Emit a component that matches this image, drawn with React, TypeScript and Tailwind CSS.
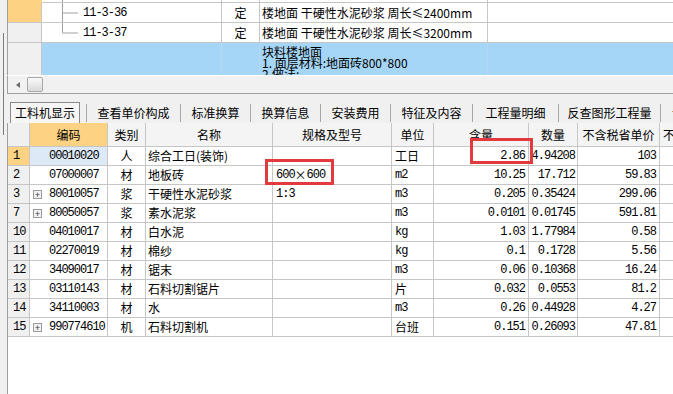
import React from 'react';

const cjk = "font-['Noto_Sans_CJK_SC',sans-serif]";
const mono = "font-['Liberation_Mono',monospace] text-[12px] tracking-[-1px]";

const rows = [
  { n: '1', code: '00010020', plus: false, type: '人', name: '综合工日(装饰)', spec: '', unit: '工日', qty: '2.86', amt: '4.94208', price: '103', sel: true },
  { n: '2', code: '07000007', plus: false, type: '材', name: '地板砖', spec: '600×600', unit: 'm2', qty: '10.25', amt: '17.712', price: '59.83' },
  { n: '3', code: '80010057', plus: true, type: '浆', name: '干硬性水泥砂浆', spec: '1:3', unit: 'm3', qty: '0.205', amt: '0.35424', price: '299.06' },
  { n: '7', code: '80050057', plus: true, type: '浆', name: '素水泥浆', spec: '', unit: 'm3', qty: '0.0101', amt: '0.01745', price: '591.81' },
  { n: '10', code: '04010017', plus: false, type: '材', name: '白水泥', spec: '', unit: 'kg', qty: '1.03', amt: '1.77984', price: '0.58' },
  { n: '11', code: '02270019', plus: false, type: '材', name: '棉纱', spec: '', unit: 'kg', qty: '0.1', amt: '0.1728', price: '5.56' },
  { n: '12', code: '34090017', plus: false, type: '材', name: '锯末', spec: '', unit: 'm3', qty: '0.06', amt: '0.10368', price: '16.24' },
  { n: '13', code: '03110143', plus: false, type: '材', name: '石料切割锯片', spec: '', unit: '片', qty: '0.032', amt: '0.0553', price: '81.2' },
  { n: '14', code: '34110003', plus: false, type: '材', name: '水', spec: '', unit: 'm3', qty: '0.26', amt: '0.44928', price: '4.27' },
  { n: '15', code: '990774610', plus: true, type: '机', name: '石料切割机', spec: '', unit: '台班', qty: '0.151', amt: '0.26093', price: '47.81' },
];

const tabs = [
  { label: '查看单价构成', w: 'w-[93px]' },
  { label: '标准换算', w: 'w-[69px]' },
  { label: '换算信息', w: 'w-[69px]' },
  { label: '安装费用', w: 'w-[69px]' },
  { label: '特征及内容', w: 'w-[81px]' },
  { label: '工程量明细', w: 'w-[85px]' },
  { label: '反查图形工程量', w: 'w-[101px]' },
];

const isAscii = (s: string) => /^[\x00-\x7f]*$/.test(s);

// spec text: digits in mono, the full-width × in the CJK face
function Spec({ text }: { text: string }) {
  const parts = text.split('×');
  return (
    <>
      {parts.map((p, i) => (
        <React.Fragment key={i}>
          {i > 0 && <span className={`${cjk} text-[12px] w-[12px] inline-block text-center`}>×</span>}
          <span className={mono}>{p}</span>
        </React.Fragment>
      ))}
    </>
  );
}

function Tree({ last, h }: { last?: boolean; h: number }) {
  return (
    <svg width="40" height={h} className="shrink-0">
      <line x1="20.5" y1="0" x2="20.5" y2={last ? h / 2 : h} stroke="#a0a0a0" />
      {h > 5 && <line x1="20" y1={h / 2 + 0.5} x2="36" y2={h / 2 + 0.5} stroke="#a0a0a0" />}
    </svg>
  );
}

function PlusBox() {
  return (
    <div className="w-[9px] h-[9px] border border-[#9a9a9a] bg-[#f2f2f2] flex items-center justify-center text-[9px] leading-none text-[#333]">
      +
    </div>
  );
}

export default function App() {
  const line = 'border-[#c6c6c6]';
  return (
    <div className={`relative w-[673px] h-[394px] overflow-hidden bg-[#f0f0f0] flex ${cjk} text-[12px] text-black`}>
      {/* splitter strip */}
      <div className="w-[7px] shrink-0">
        <div className="ml-[3px] mt-[33px] w-px h-[102px] bg-[#7c7c7c]" />
      </div>

      <div className="flex-1 flex flex-col min-w-0">
        {/* upper grid */}
        <div className="h-[75px] bg-white border-l border-[#a0a0a0] flex flex-col overflow-hidden">
          <div className="flex h-[3px] shrink-0">
            <div className="w-[34px] bg-[#fdd283]" />
            <div className={`w-[180px] border-r border-b ${line}`}><Tree h={2} /></div>
            <div className={`w-[38px] border-r border-b ${line}`} />
            <div className={`w-[228px] border-r border-b ${line}`} />
            <div className={`flex-1 border-b ${line}`} />
          </div>
          {[
            { code: '11-3-36', name: '楼地面 干硬性水泥砂浆 周长≤2400mm', bg: 'bg-[#fdd283]' },
            { code: '11-3-37', name: '楼地面 干硬性水泥砂浆 周长≤3200mm', bg: 'bg-[#f0f0f0]', last: true },
          ].map((r) => (
            <div key={r.code} className="flex h-[20px] shrink-0">
              <div className={`w-[34px] border-r border-b ${line} ${r.bg}`} />
              <div className={`w-[180px] border-r border-b ${line} flex items-center`}>
                <Tree h={19} last={r.last} />
                <span className={`${mono} ml-[1px]`}>{r.code}</span>
              </div>
              <div className={`w-[38px] border-r border-b ${line} flex items-center justify-center`}>定</div>
              <div className={`w-[228px] border-r border-b ${line} flex items-center pl-[2px] whitespace-nowrap overflow-hidden leading-none`}>
                {r.name}
              </div>
              <div className={`flex-1 border-b ${line}`} />
            </div>
          ))}
          <div className="flex h-[32px] shrink-0 bg-[#a6d6f7]">
            <div className={`w-[34px] border-r ${line} bg-[#f0f0f0]`} />
            <div className="w-[180px] border-r border-[#b9d7ec]" />
            <div className="w-[38px] border-r border-[#b9d7ec]" />
            <div className="w-[228px] border-r border-[#b9d7ec] pl-[2px] pt-[3px] leading-[11px] overflow-hidden whitespace-nowrap">
              <div>块料楼地面</div>
              <div>1. 面层材料:地面砖800*800</div>
              <div>2.做法:</div>
            </div>
            <div className="flex-1" />
          </div>
        </div>

        {/* horizontal scrollbar */}
        <div className="h-[19px] shrink-0 border-l border-t border-b border-l-[#a0a0a0] border-t-white border-b-[#a0a0a0] bg-[#f1f1f1] flex items-center">
          <div className="w-[19px] flex items-center justify-center">
            <div className="w-0 h-0 border-y-[3px] border-y-transparent border-r-[4px] border-r-[#6a6a6a]" />
          </div>
          <div className="w-[16px] h-[15px] rounded-[2px] border border-[#a9a9a9] bg-gradient-to-b from-[#fafafa] to-[#d9d9d9]" />
        </div>

        {/* tabs */}
        <div className="h-[29px] shrink-0 flex items-end whitespace-nowrap overflow-hidden">
          <div className="ml-[3px] w-[70px] shrink-0 h-[21px] border border-[#8a8a8a] border-b-0 bg-[#f6f6f6] flex items-center justify-center">
            工料机显示
          </div>
          <div className="ml-[6px] flex items-center h-[21px] shrink-0">
            {tabs.map((t) => (
              <React.Fragment key={t.label}>
                <div className="w-px h-[18px] shrink-0 bg-[#a8a8a8]" />
                <div className={`${t.w} shrink-0 text-center`}>{t.label}</div>
              </React.Fragment>
            ))}
            <div className="w-px h-[18px] shrink-0 bg-[#a8a8a8]" />
            <div className="pl-[11px] shrink-0">说明信息</div>
          </div>
        </div>

        {/* main grid */}
        <div className="flex-1 bg-white border-l border-[#a0a0a0] overflow-hidden">
          <div className={`flex h-[24px] border-b ${line} whitespace-nowrap`}>
            <div className={`w-[22px] shrink-0 border-r ${line} bg-[#f0f0f0]`} />
            <div className={`w-[78px] shrink-0 border-r ${line} bg-[#fdd283] flex items-center justify-center`}>编码</div>
            <div className={`w-[38px] shrink-0 border-r ${line} bg-[#f4f4f4] flex items-center justify-center`}>类别</div>
            <div className={`w-[127px] shrink-0 border-r ${line} bg-[#f4f4f4] flex items-center justify-center`}>名称</div>
            <div className={`w-[119px] shrink-0 border-r ${line} bg-[#f4f4f4] flex items-center justify-center`}>规格及型号</div>
            <div className={`w-[42px] shrink-0 border-r ${line} bg-[#f4f4f4] flex items-center justify-center`}>单位</div>
            <div className={`w-[95px] shrink-0 border-r ${line} bg-[#f4f4f4] flex items-center justify-center`}>含量</div>
            <div className={`w-[49px] shrink-0 border-r ${line} bg-[#f4f4f4] flex items-center justify-center`}>数量</div>
            <div className={`w-[82px] shrink-0 border-r ${line} bg-[#f4f4f4] flex items-center justify-center`}>不含税省单价</div>
            <div className="w-[80px] shrink-0 bg-[#f4f4f4] flex items-center pl-[3px]">不含税市场价</div>
          </div>
          {rows.map((r) => (
            <div key={r.n} className={`flex h-[19px] border-b ${line} whitespace-nowrap leading-none`}>
              <div className={`w-[22px] shrink-0 border-r ${line} ${r.sel ? 'bg-[#fdd283]' : 'bg-[#f0f0f0]'} flex items-center pl-[5px] ${mono}`}>
                {r.n}
              </div>
              <div className={`w-[78px] shrink-0 border-r ${line} ${r.sel ? 'bg-[#dde9f7]' : ''} flex items-center pl-[3px]`}>
                <div className="w-[16px] shrink-0">{r.plus && <PlusBox />}</div>
                <span className={mono}>{r.code}</span>
              </div>
              <div className={`w-[38px] shrink-0 border-r ${line} flex items-center justify-center`}>{r.type}</div>
              <div className={`w-[127px] shrink-0 border-r ${line} flex items-center pl-[2px]`}>{r.name}</div>
              <div className={`w-[119px] shrink-0 border-r ${line} flex items-center pl-[3px]`}>
                <Spec text={r.spec} />
              </div>
              <div className={`w-[42px] shrink-0 border-r ${line} flex items-center pl-[3px] ${isAscii(r.unit) ? mono : ''}`}>
                {r.unit}
              </div>
              <div className={`w-[95px] shrink-0 border-r ${line} flex items-center justify-end pr-[3px] ${mono}`}>{r.qty}</div>
              <div className={`w-[49px] shrink-0 border-r ${line} flex items-center justify-end pr-[2px] ${mono}`}>{r.amt}</div>
              <div className={`w-[82px] shrink-0 border-r ${line} flex items-center justify-end pr-[3px] ${mono}`}>{r.price}</div>
              <div className="w-[80px] shrink-0" />
            </div>
          ))}
        </div>
      </div>

      {/* red annotation boxes */}
      <div className="absolute left-[265px] top-[159px] w-[69px] h-[26px] border-[3px] border-[#e23a3f]" />
      <div className="absolute left-[470px] top-[138px] w-[63px] h-[26px] border-[3px] border-[#e23a3f]" />
    </div>
  );
}
